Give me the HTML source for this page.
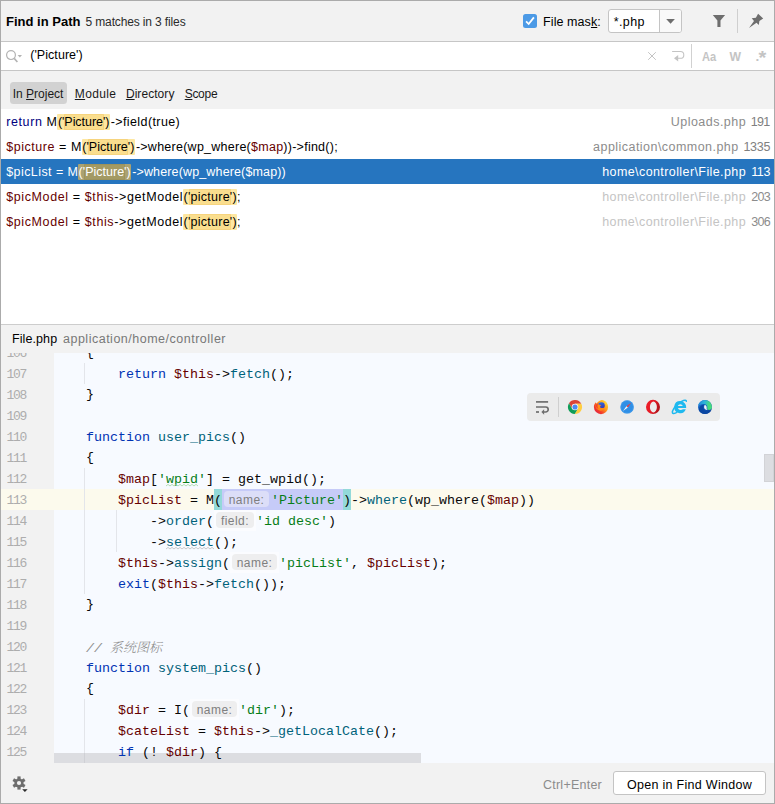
<!DOCTYPE html>
<html><head><meta charset="utf-8"><title>Find in Path</title>
<style>
html,body{margin:0;padding:0;}
body{width:775px;height:804px;overflow:hidden;background:#f2f2f2;font-family:"Liberation Sans", "Noto Sans CJK SC", sans-serif;font-size:13px;}
#win{position:absolute;left:0;top:0;width:773px;height:802px;border:1px solid #ababab;background:#f2f2f2;overflow:hidden;}
#win>*{position:absolute;}
.abs{position:absolute;}
.t{position:absolute;white-space:pre;line-height:20px;height:20px;}
u{text-decoration:underline;text-underline-offset:1px;}
.hl{background:#fce8a1;border-radius:2px;}
.row{position:absolute;left:0;width:773px;height:25px;}
.code{position:absolute;left:53px;white-space:pre;font-family:"Liberation Mono", "Noto Sans CJK SC", monospace;font-size:13.333px;line-height:21px;height:21px;color:#080808;}
.ln{position:absolute;left:5.5px;white-space:pre;font-family:"Liberation Mono", "Noto Sans CJK SC", monospace;font-size:13px;line-height:21px;height:21px;color:#adadad;letter-spacing:-1.3px;}
.k{color:#0033b3;} .v{color:#660000;} .f{color:#00627a;} .s{color:#067d17;} .c{color:#8c8c8c;font-style:italic;}
.hint{display:inline-block;line-height:1;text-align:center;color:#7f7f7f;font-family:"Liberation Sans", "Noto Sans CJK SC", sans-serif;font-size:12px;letter-spacing:0.45px;}
.hb{position:absolute;height:16px;border-radius:4px;background:#ededee;}
</style></head><body>
<div id="win">
<div class="abs" style="left:0px;top:40px;width:773px;height:1px;background:#c6c6c6;"></div>
<div class="abs" style="left:0px;top:41px;width:773px;height:28px;background:#fff;"></div>
<div class="abs" style="left:0px;top:69px;width:773px;height:1px;background:#c6c6c6;"></div>
<div class="abs" style="left:0px;top:108px;width:773px;height:215px;background:#fff;"></div>
<div class="abs" style="left:0px;top:158px;width:773px;height:25px;background:#2675bf;"></div>
<div class="abs" style="left:0px;top:323px;width:773px;height:1px;background:#cdcdcd;"></div>
<div class="abs" style="left:53px;top:352px;width:720px;height:410px;background:#f7faff;"></div>
<span class="t " style="left:5.00px;top:11.00px;font-size:13px;color:#000;letter-spacing:0.009px;font-weight:bold;">Find in Path</span><span class="t " style="left:84.50px;top:11.00px;font-size:12px;color:#2b2b2b;letter-spacing:-0.136px;">5 matches in 3 files</span><div class="abs" style="left:522px;top:13px;width:14px;height:14px;background:#4c9ae6;border-radius:2.5px;"><svg width="14" height="14" viewBox="0 0 14 14" style="position:absolute;left:0;top:0"><path d="M3.1 7.3 L5.7 10 L10.9 3.4" fill="none" stroke="#fff" stroke-width="1.8"/></svg></div>
<span class="t " style="left:542.10px;top:11.00px;font-size:12.5px;color:#000;letter-spacing:0.075px;">File mas<u>k</u>:</span><div class="abs" style="left:607px;top:8px;width:72px;height:22px;border:1px solid #c4c4c4;border-radius:3px;background:#fff;overflow:hidden;"><div class="abs" style="left:50px;top:0;width:1px;height:22px;background:#c4c4c4"></div><div class="abs" style="left:51px;top:0;width:21px;height:22px;background:#f9f9f9"></div><svg class="abs" style="left:56px;top:8px" width="11" height="7" viewBox="0 0 11 7"><path d="M1.2 1.1 L9.9 1.1 L5.55 5.7 Z" fill="#6e6e6e"/></svg></div>
<span class="t " style="left:612.70px;top:11.00px;font-size:12.5px;color:#000;letter-spacing:0.419px;">*.php</span><svg class="abs" style="left:710px;top:12px" width="16" height="16" viewBox="0 0 16 16"><path d="M1.8 2 L14.1 2 L9.5 7.6 L9.5 13.9 L6.4 13.9 L6.4 7.6 Z" fill="#6e6e6e"/></svg>
<div class="abs" style="left:736px;top:8px;width:1px;height:24px;background:#cfcfcf;"></div>
<svg class="abs" style="left:745px;top:10px" width="20" height="20" viewBox="746 11 20 20"><path d="M758.1 13.7 L763.2 18.4 L759.4 21.0 L758.8 24.9 L756.5 22.8 L749 28 L754.0 20.9 L751.7 18.2 L755.9 17.8 Z" fill="#6e6e6e"/></svg>
<svg class="abs" style="left:4px;top:46px" width="20" height="18" viewBox="0 0 20 18"><g fill="none" stroke="#b3b3b3" stroke-width="1.2"><circle cx="6" cy="8.1" r="4.4"/><path d="M9.2 11.4 L12.4 15" stroke-width="1.6"/></g><path d="M12.6 8 L17 8 L14.8 10.6 Z" fill="#b3b3b3"/></svg>
<span class="t " style="left:29.20px;top:44.00px;font-size:12.5px;color:#000;letter-spacing:0.053px;">('Picture')</span><svg class="abs" style="left:639px;top:43px" width="134" height="24" viewBox="640 44 134 24"><path d="M648.2 52.2 L655.8 59.8 M655.8 52.2 L648.2 59.8" stroke="#c4c4c4" stroke-width="1" fill="none"/><path d="M672.1 51.5 L680.4 51.5 A3.4 3.4 0 0 1 680.4 58.3 L677.5 58.3" fill="none" stroke="#c4c4c4" stroke-width="1.1"/><path d="M674 58.3 L678.2 55.1 L678.2 61.5 Z" fill="#c4c4c4"/><rect x="691" y="44" width="1" height="24" fill="#d1d1d1"/><g font-family="Liberation Sans, sans-serif" font-weight="bold" font-size="13.5" fill="#c4c4c4"><text x="702" y="60.7" textLength="14.2" lengthAdjust="spacingAndGlyphs">Aa</text><text x="729.4" y="60.7" textLength="11.5" lengthAdjust="spacingAndGlyphs">W</text><text x="755.6" y="60.7" font-size="13.5">.</text><text x="758.6" y="64.2" font-size="19" textLength="7.8" lengthAdjust="spacingAndGlyphs">*</text></g></svg>
<div class="abs" style="left:9px;top:81px;width:57px;height:22px;background:#d2d2d2;border-radius:3.5px;"></div>
<span class="t " style="left:11.80px;top:83.00px;font-size:12px;color:#1a1a1a;letter-spacing:-0.010px;">In <u>P</u>roject</span><span class="t " style="left:73.80px;top:83.00px;font-size:12px;color:#1a1a1a;letter-spacing:0.357px;"><u>M</u>odule</span><span class="t " style="left:124.90px;top:83.00px;font-size:12px;color:#1a1a1a;letter-spacing:0.065px;"><u>D</u>irectory</span><span class="t " style="left:183.70px;top:83.00px;font-size:12px;color:#1a1a1a;letter-spacing:-0.286px;"><u>S</u>cope</span><span class="t " style="left:5.20px;top:111.00px;font-size:12.5px;color:#000;letter-spacing:0.607px;"><span style="color:#000080">return</span> M</span><div class="abs" style="left:56px;top:113px;width:53px;height:16px;background:#fde7a2;border-radius:1px;"></div>
<div class="abs" style="left:63px;top:113px;width:40px;height:16px;background:#fade8e;box-shadow:inset 0 0 0 1px #f6d47e;box-sizing:border-box;border-radius:1px;"></div>
<span class="t " style="left:56.90px;top:111.00px;font-size:12.5px;color:#000;letter-spacing:-0.047px;">('Picture')</span><span class="t " style="left:109.70px;top:111.00px;font-size:12.5px;color:#000;letter-spacing:0.403px;">-&gt;field(true)</span><span class="t " style="left:5.20px;top:136.00px;font-size:12.5px;color:#000;letter-spacing:0.547px;"><span style="color:#660000">$picture</span> = M</span><div class="abs" style="left:81px;top:138px;width:53px;height:16px;background:#fde7a2;border-radius:1px;"></div>
<div class="abs" style="left:87px;top:138px;width:40px;height:16px;background:#fade8e;box-shadow:inset 0 0 0 1px #f6d47e;box-sizing:border-box;border-radius:1px;"></div>
<span class="t " style="left:81.30px;top:136.00px;font-size:12.5px;color:#000;letter-spacing:0.008px;">('Picture')</span><span class="t " style="left:134.90px;top:136.00px;font-size:12.5px;color:#000;letter-spacing:0.255px;">-&gt;where(wp_where(<span style="color:#660000">$map</span>))-&gt;find();</span><span class="t " style="left:5.20px;top:161.00px;font-size:12.5px;color:#fff;letter-spacing:0.429px;">$picList = M</span><div class="abs" style="left:77px;top:163px;width:53px;height:16px;background:#aaa272;border-radius:1px;"></div>
<div class="abs" style="left:83px;top:163px;width:41px;height:16px;background:#a39a64;box-shadow:inset 0 0 0 1px #9c935c;box-sizing:border-box;border-radius:1px;"></div>
<span class="t " style="left:77.60px;top:161.00px;font-size:12.5px;color:#fff;letter-spacing:0.008px;">('Picture')</span><span class="t " style="left:131.20px;top:161.00px;font-size:12.5px;color:#fff;letter-spacing:0.143px;">-&gt;where(wp_where($map))</span><span class="t " style="left:5.20px;top:186.00px;font-size:12.5px;color:#000;letter-spacing:0.611px;"><span style="color:#660000">$picModel</span> = <span style="color:#660000">$this</span>-&gt;getModel</span><div class="abs" style="left:182px;top:188px;width:54px;height:16px;background:#fde7a2;border-radius:1px;"></div>
<div class="abs" style="left:188px;top:188px;width:42px;height:16px;background:#fade8e;box-shadow:inset 0 0 0 1px #f6d47e;box-sizing:border-box;border-radius:1px;"></div>
<span class="t " style="left:182.50px;top:186.00px;font-size:12.5px;color:#000;letter-spacing:0.252px;">('picture')</span><span class="t " style="left:236.10px;top:186.00px;font-size:12.5px;color:#000;letter-spacing:-0.684px;">;</span><span class="t " style="left:5.20px;top:211.00px;font-size:12.5px;color:#000;letter-spacing:0.611px;"><span style="color:#660000">$picModel</span> = <span style="color:#660000">$this</span>-&gt;getModel</span><div class="abs" style="left:182px;top:213px;width:54px;height:16px;background:#fde7a2;border-radius:1px;"></div>
<div class="abs" style="left:188px;top:213px;width:42px;height:16px;background:#fade8e;box-shadow:inset 0 0 0 1px #f6d47e;box-sizing:border-box;border-radius:1px;"></div>
<span class="t " style="left:182.50px;top:211.00px;font-size:12.5px;color:#000;letter-spacing:0.252px;">('picture')</span><span class="t " style="left:236.10px;top:211.00px;font-size:12.5px;color:#000;letter-spacing:-0.684px;">;</span><span class="t " style="left:669.80px;top:111.00px;font-size:12.5px;color:#8c8c8c;letter-spacing:0.463px;">Uploads.php</span><span class="t " style="left:749.70px;top:111.00px;font-size:12.5px;color:#808080;letter-spacing:-0.620px;">191</span><span class="t " style="left:592.10px;top:136.00px;font-size:12.5px;color:#8c8c8c;letter-spacing:0.459px;">application\common.php</span><span class="t " style="left:742.40px;top:136.00px;font-size:12.5px;color:#808080;letter-spacing:-0.278px;">1335</span><span class="t " style="left:601.20px;top:161.00px;font-size:12.5px;color:#fff;letter-spacing:0.408px;">home\controller\File.php</span><span class="t " style="left:750.20px;top:161.00px;font-size:12.5px;color:#fff;letter-spacing:-0.346px;">113</span><span class="t " style="left:601.20px;top:186.00px;font-size:12.5px;color:#c4c4c4;letter-spacing:0.408px;">home\controller\File.php</span><span class="t " style="left:750.20px;top:186.00px;font-size:12.5px;color:#8c8c8c;letter-spacing:-0.653px;">203</span><span class="t " style="left:601.20px;top:211.00px;font-size:12.5px;color:#c4c4c4;letter-spacing:0.408px;">home\controller\File.php</span><span class="t " style="left:750.20px;top:211.00px;font-size:12.5px;color:#8c8c8c;letter-spacing:-0.653px;">306</span><span class="t " style="left:11.00px;top:328.00px;font-size:12.5px;color:#000;letter-spacing:0.089px;">File.php</span><span class="t " style="left:62.00px;top:328.00px;font-size:12.5px;color:#787878;letter-spacing:0.504px;">application/home/controller</span><div class="abs" style="left:0px;top:488px;width:773px;height:21px;background:#fcfaed;"></div>
<div class="abs" style="left:213px;top:488px;width:8px;height:21px;background:#93d9d9;"></div>
<div class="abs" style="left:221px;top:488px;width:121px;height:21px;background:#c6cbf8;"></div>
<div class="abs" style="left:342px;top:488px;width:8px;height:21px;background:#93d9d9;"></div>
<div class="abs" style="left:223px;top:490px;width:45px;height:16px;background:#dcdef8;border-radius:4px;"></div>
<div class="abs" style="left:213px;top:509px;width:42px;height:21px;background:#fbfcff;"></div>
<div class="abs" style="left:229px;top:551px;width:49px;height:21px;background:#fbfcff;"></div>
<div class="abs" style="left:189px;top:698px;width:49px;height:21px;background:#fbfcff;"></div>
<div class="abs" style="left:215px;top:511px;width:38px;height:16px;background:#eeeeef;border-radius:4px;"></div>
<div class="abs" style="left:231px;top:553px;width:45px;height:16px;background:#eeeeef;border-radius:4px;"></div>
<div class="abs" style="left:191px;top:700px;width:45px;height:16px;background:#eeeeef;border-radius:4px;"></div>
<div class="abs" style="left:83px;top:362px;width:1px;height:21px;background:#e3e5ea;"></div>
<div class="abs" style="left:83px;top:467px;width:1px;height:126px;background:#e3e5ea;"></div>
<div class="abs" style="left:115px;top:509px;width:1px;height:42px;background:#e3e5ea;"></div>
<div class="abs" style="left:83px;top:698px;width:1px;height:64px;background:#e3e5ea;"></div>
<div class="abs" style="left:53px;top:752px;width:367px;height:10px;background:#dcdde1;"></div>
<div class="abs" style="left:763px;top:453px;width:10px;height:28px;background:#dcdde1;border:1px solid #d2d3d7;box-sizing:border-box;"></div>
<div class="abs" style="left:83px;top:752px;width:1px;height:10px;background:#cfd0d5;"></div>
<div class="abs" style="left:0;top:352px;width:773px;height:410px;overflow:hidden;"><div class="ln" style="top:-10px">106</div><div class="code" style="top:-10px">    <span style="position:relative;top:-1.5px">{</span></div><div class="ln" style="top:11px">107</div><div class="code" style="top:11px">        <span class="k">return</span> <span class="v">$this</span>-&gt;<span class="f">fetch</span>();</div><div class="ln" style="top:32px">108</div><div class="code" style="top:32px">    <span style="position:relative;top:-1.5px">}</span></div><div class="ln" style="top:53px">109</div><div class="code" style="top:53px"></div><div class="ln" style="top:74px">110</div><div class="code" style="top:74px">    <span class="k">function</span> <span class="f">user_pics</span>()</div><div class="ln" style="top:95px">111</div><div class="code" style="top:95px">    <span style="position:relative;top:-1.5px">{</span></div><div class="ln" style="top:116px">112</div><div class="code" style="top:116px">        <span class="v">$map</span>[<span class="s">&#39;wpid&#39;</span>] = get_wpid();</div><div class="ln" style="top:137px">113</div><div class="code" style="top:137px">        <span class="v">$picList</span> = M(<span class="hint" style="width:49px">name:</span><span class="s">&#39;Picture&#39;</span>)-&gt;<span class="f">where</span>(wp_where(<span class="v">$map</span>))</div><div class="ln" style="top:158px">114</div><div class="code" style="top:158px">            -&gt;<span class="f">order</span>(<span class="hint" style="width:42px">field:</span><span class="s">&#39;id desc&#39;</span>)</div><div class="ln" style="top:179px">115</div><div class="code" style="top:179px">            -&gt;<span class="f">select</span>();</div><div class="ln" style="top:200px">116</div><div class="code" style="top:200px">        <span class="v">$this</span>-&gt;<span class="f">assign</span>(<span class="hint" style="width:49px">name:</span><span class="s">&#39;picList&#39;</span>, <span class="v">$picList</span>);</div><div class="ln" style="top:221px">117</div><div class="code" style="top:221px">        <span class="k">exit</span>(<span class="v">$this</span>-&gt;<span class="f">fetch</span>());</div><div class="ln" style="top:242px">118</div><div class="code" style="top:242px">    <span style="position:relative;top:-1.5px">}</span></div><div class="ln" style="top:263px">119</div><div class="code" style="top:263px"></div><div class="ln" style="top:284px">120</div><div class="code" style="top:284px">    <span class="c">// <span style="font-family:'Liberation Serif','Noto Serif CJK SC',serif;font-size:13px;font-weight:300;letter-spacing:0">系统图标</span></span></div><div class="ln" style="top:305px">121</div><div class="code" style="top:305px">    <span class="k">function</span> <span class="f">system_pics</span>()</div><div class="ln" style="top:326px">122</div><div class="code" style="top:326px">    <span style="position:relative;top:-1.5px">{</span></div><div class="ln" style="top:347px">123</div><div class="code" style="top:347px">        <span class="v">$dir</span> = I(<span class="hint" style="width:49px">name:</span><span class="s">&#39;dir&#39;</span>);</div><div class="ln" style="top:368px">124</div><div class="code" style="top:368px">        <span class="v">$cateList</span> = <span class="v">$this</span>-&gt;<span class="f">_getLocalCate</span>();</div><div class="ln" style="top:389px">125</div><div class="code" style="top:389px">        <span class="k">if</span> (! <span class="v">$dir</span>) {</div></div>
<svg class="abs" style="left:165px;top:483px" width="32" height="3" viewBox="0 0 32 3"><polyline points="0.0,2.0 2.0,0.4 4.0,2.0 6.0,0.4 8.0,2.0 10.0,0.4 12.0,2.0 14.0,0.4 16.0,2.0 18.0,0.4 20.0,2.0 22.0,0.4 24.0,2.0 26.0,0.4 28.0,2.0 30.0,0.4 32.0,2.0" fill="none" stroke="#9fd6a3" stroke-width="0.8"/></svg>
<svg class="abs" style="left:165px;top:546px" width="48" height="3" viewBox="0 0 48 3"><polyline points="0.0,2.0 2.0,0.4 4.0,2.0 6.0,0.4 8.0,2.0 10.0,0.4 12.0,2.0 14.0,0.4 16.0,2.0 18.0,0.4 20.0,2.0 22.0,0.4 24.0,2.0 26.0,0.4 28.0,2.0 30.0,0.4 32.0,2.0 34.0,0.4 36.0,2.0 38.0,0.4 40.0,2.0 42.0,0.4 44.0,2.0 46.0,0.4 48.0,2.0" fill="none" stroke="#bdbdbd" stroke-width="0.8"/></svg>
<div class="abs" style="left:526px;top:392px;width:193px;height:28px;background:#ebebeb;border-radius:4px;"></div>
<svg class="abs" style="left:533px;top:398px" width="17" height="17" viewBox="0 0 17 17"><g fill="none" stroke="#6e6e6e" stroke-width="1.7"><path d="M2 2.9 L14.1 2.9"/><path d="M2 8 L11.7 8 A2.5 2.5 0 0 1 11.7 13 L9.6 13"/><path d="M2 13 L5 13"/></g><path d="M7.4 13 L10.1 10.3 L10.1 15.7 Z" fill="#6e6e6e"/></svg>
<div class="abs" style="left:557px;top:396px;width:1px;height:20px;background:#cfcfcf;"></div>
<svg class="abs" style="left:566px;top:398px" width="16" height="16" viewBox="0 0 16 16"><path d="M2.0 4.21 A7.1 7.1 0 0 1 14.29 4.7 L8 4.7 L5.14 9.65 Z" fill="#db4437"/><path d="M14.29 4.7 A7.1 7.1 0 0 1 7.72 15.09 L10.86 9.65 L8 4.7 Z" fill="#ffcd40"/><path d="M7.72 15.09 A7.1 7.1 0 0 1 2.0 4.21 L5.14 9.65 L10.86 9.65 Z" fill="#0f9d58"/><circle cx="8" cy="8" r="3.3" fill="#f4f4f4"/><circle cx="8" cy="8" r="2.55" fill="#4a8af4"/></svg>
<svg class="abs" style="left:592px;top:398px" width="16" height="16" viewBox="0 0 16 16"><defs><linearGradient id="ffg" x1="0.9" y1="0.1" x2="0.1" y2="0.9"><stop offset="0" stop-color="#ffd93b"/><stop offset="0.4" stop-color="#ff9b1c"/><stop offset="0.7" stop-color="#f5412a"/><stop offset="1" stop-color="#e01f3f"/></linearGradient><linearGradient id="ffb" x1="0.3" y1="0" x2="0.7" y2="1"><stop offset="0" stop-color="#2a6fe6"/><stop offset="1" stop-color="#4030a8"/></linearGradient></defs><path d="M8 1.2 C9 0.6 10.4 0.9 10.8 1.6 C13.4 2.6 15.1 5.2 15.1 8.1 A7.1 7.1 0 0 1 0.9 8.1 C0.9 6.2 1.6 4.4 2.9 3.2 C3 4 3.3 4.4 3.6 4.6 C4.6 2.8 6.2 1.6 8 1.2 Z" fill="url(#ffg)"/><circle cx="8.4" cy="6.6" r="3.4" fill="url(#ffb)"/><path d="M2.4 5.8 C3.8 4.6 5.6 4.8 6.4 5.8 C7.2 5.6 8 6 8.2 6.6 C7.2 6.8 6.8 7.6 7.2 8.2 C7.8 9.2 9.6 9.4 11.4 8.4 C11 10.8 8.8 12 6.6 11.6 C4 11 2.2 8.6 2.4 5.8 Z" fill="#ff8a16"/><path d="M2.4 5.8 C3.2 5.1 4.2 4.9 5 5.1 C4.2 6.4 4.4 8.6 5.6 10 C3.6 9.2 2.3 7.6 2.4 5.8 Z" fill="#f2442a"/><path d="M10.2 1.3 C12.6 2.4 14.4 4.6 14.6 7.6 C14 6 13 5 12 4.6 C12.2 3.4 11.4 2.2 10.2 1.3 Z" fill="#ffd83d"/></svg>
<svg class="abs" style="left:618px;top:398px" width="16" height="16" viewBox="619 399 16 16"><circle cx="627.1" cy="406.9" r="6.7" fill="#2f8fe6"/><circle cx="627.1" cy="406.9" r="6.2" fill="none" stroke="#57a8f0" stroke-width="0.9" stroke-dasharray="0.7 0.7"/><path d="M631.2 402.8 L627.8 407.6 L626.4 406.2 Z" fill="#f03b3b"/><path d="M623.0 411.0 L626.4 406.2 L627.8 407.6 Z" fill="#f4f6fa"/></svg>
<svg class="abs" style="left:644px;top:398px" width="16" height="16" viewBox="645 399 16 16"><defs><linearGradient id="opg" x1="0" y1="0" x2="1" y2="0.3"><stop offset="0" stop-color="#f01c28"/><stop offset="0.6" stop-color="#e21b25"/><stop offset="1" stop-color="#b3141b"/></linearGradient></defs><path fill-rule="evenodd" fill="url(#opg)" d="M653 399.8 A7 7.15 0 1 0 653 414.1 A7 7.15 0 1 0 653 399.8 Z M653.4 401.6 A3.5 5.4 0 1 1 653.4 412.4 A3.5 5.4 0 1 1 653.4 401.6 Z"/></svg>
<svg class="abs" style="left:670px;top:398px" width="16" height="16" viewBox="671 399 16 16"><g fill="#1fb9ef"><path fill-rule="evenodd" d="M680.2 401.1 A6 6 0 1 0 685.8 409.3 L682.9 409.3 A3 2.6 0 0 1 677.9 408.0 L686.1 408.0 A6 6 0 0 0 680.2 401.1 Z M677.8 405.9 A2.6 2.3 0 0 1 682.8 405.9 Z"/></g><path d="M686.3 401.9 C686.8 400 684.6 399.8 681.6 401.3 C677.8 403.2 673.4 407.8 672.5 411.2 C671.8 414 674.2 414.2 677.2 412.2" fill="none" stroke="#1fb9ef" stroke-width="1.5"/></svg>
<svg class="abs" style="left:696px;top:398px" width="16" height="16" viewBox="697 399 16 16"><defs><linearGradient id="edt" x1="0" y1="0" x2="1" y2="0.2"><stop offset="0" stop-color="#1f80dc"/><stop offset="0.5" stop-color="#2fb4d8"/><stop offset="0.85" stop-color="#46da80"/></linearGradient><linearGradient id="edb" x1="0" y1="0" x2="0.8" y2="1"><stop offset="0" stop-color="#1c78dc"/><stop offset="1" stop-color="#0a3f97"/></linearGradient></defs><circle cx="705" cy="407" r="7" fill="url(#edb)"/><path d="M698.05 406.3 A7 7 0 0 1 712 407 C712 408.7 711 409.9 709.2 409.9 C707.8 409.9 706.9 409.3 707.2 408.2 C707.8 406.2 706.6 404.3 704.2 404.1 C701.6 403.9 699.2 405 698.05 406.3 Z" fill="url(#edt)"/><path d="M704.7 405.1 C706.1 405.3 707 406.7 706.7 408.1 C706.5 408.9 706.8 409.6 707.7 409.9 C705.9 410.2 704.3 409 704.1 407.4 C704 406.5 704.2 405.7 704.7 405.1 Z" fill="#eef3f9"/><path d="M699.2 410.8 C699.8 412.6 702.2 414 705 414 C707.6 414 709.8 412.8 711.2 410.8 C709 412.2 704.6 412.4 703.3 408.6 C702.9 407.2 703.3 405.6 704.4 404.7 C701.2 404.6 698.4 407.2 699.2 410.8 Z" fill="#0b47a2"/></svg>
<svg class="abs" style="left:10px;top:774px" width="18" height="18" viewBox="0 0 18 18"><g transform="translate(8,8)"><g fill="#6e6e6e"><circle r="4.6"/><rect x="-1.6" y="-6.6" width="3.2" height="3" transform="rotate(0)"/><rect x="-1.6" y="-6.6" width="3.2" height="3" transform="rotate(60)"/><rect x="-1.6" y="-6.6" width="3.2" height="3" transform="rotate(120)"/><rect x="-1.6" y="-6.6" width="3.2" height="3" transform="rotate(180)"/><rect x="-1.6" y="-6.6" width="3.2" height="3" transform="rotate(240)"/><rect x="-1.6" y="-6.6" width="3.2" height="3" transform="rotate(300)"/></g><circle r="2.1" fill="#f2f2f2"/></g><path d="M11.2 14.3 L16.6 14.3 L13.9 17 Z" fill="#2b2b2b"/></svg>
<span class="t " style="left:542.00px;top:774.00px;font-size:12.5px;color:#8c8c8c;letter-spacing:0.237px;">Ctrl+Enter</span><div class="abs" style="left:612px;top:770px;width:151px;height:22px;border:1px solid #c4c4c4;border-radius:3px;background:#fff;"></div>
<span class="t " style="left:626.00px;top:774.00px;font-size:12.5px;color:#000;letter-spacing:0.289px;">Open in Find Window</span></div>
</body></html>
